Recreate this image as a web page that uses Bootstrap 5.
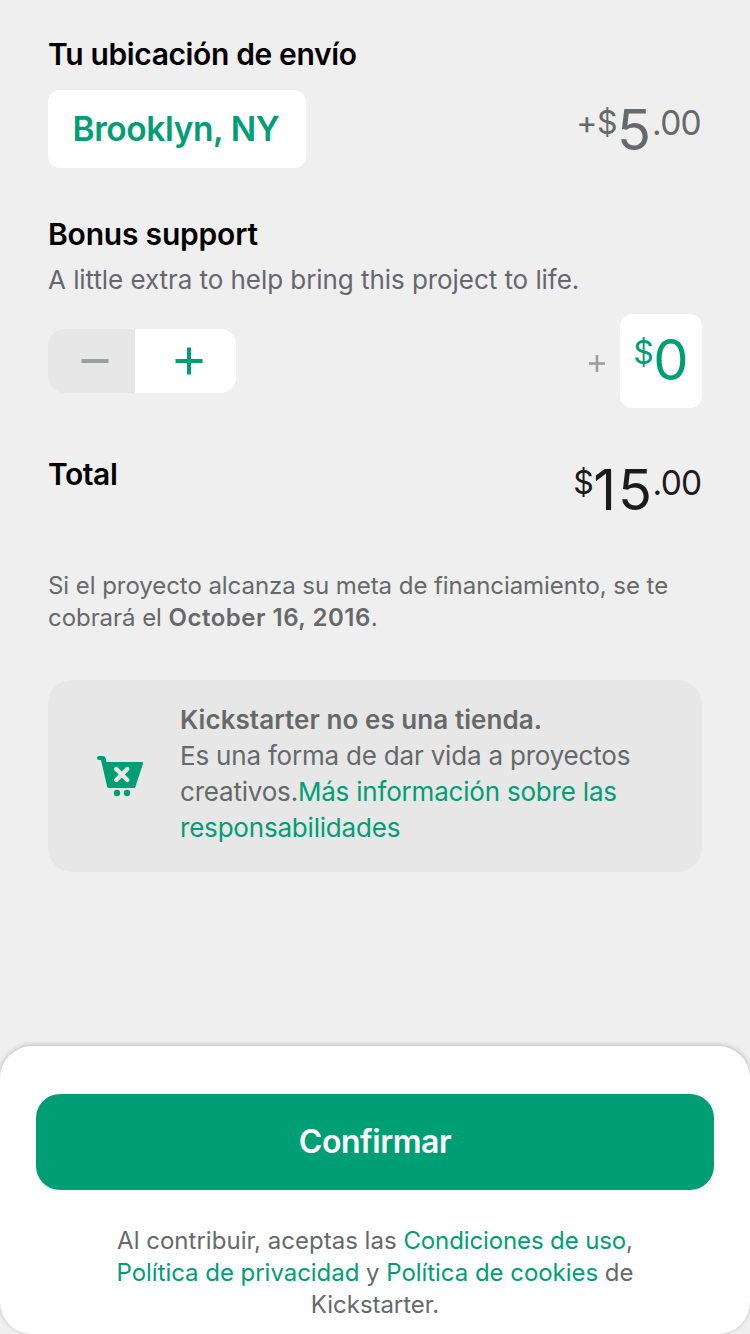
<!DOCTYPE html>
<html lang="es">
<head>
<meta charset="utf-8">
<meta name="viewport" content="width=device-width, initial-scale=1">
<title>Confirmar contribución</title>
<link href="https://cdn.jsdelivr.net/npm/bootstrap@5.3.0/dist/css/bootstrap.min.css" rel="stylesheet">
<style>
:root { --ks-green: #009e74; --ks-grey: #656969; --ks-bg: #efefef; --ks-soft: #e7e7e7; }
body { background: var(--ks-bg); font-family: Inter, "Liberation Sans", sans-serif; color: var(--ks-grey); }
.screen { height: 1334px; overflow: hidden; white-space: nowrap; }
.pledge { padding: 36px 48px 0; height: 1046px; }
.heading { font-size: 30px; line-height: 37px; height: 36px; font-weight: 600; color: #000; margin: 0; letter-spacing: -.2px; }
.heading-location { letter-spacing: -.37px; }
.heading-total { letter-spacing: -.45px; }
.green { color: var(--ks-green); text-decoration: none; }
.row-location { margin-top: 18px; }
.place { width: 258px; height: 78px; border-radius: 12px; border: 0; font-size: 33.5px; font-weight: 600; line-height: 78px; padding: 0 0 0 24.5px; text-align: left; background: #fff; letter-spacing: -.4px; }
.heading-bonus { margin-top: 48px; }
.hint { font-size: 26px; line-height: 32px; margin-top: 12px; letter-spacing: -.06px; color: #66666e; }
.row-bonus { margin-top: 18px; }
.amount { display: flex; align-items: flex-start; }
.amount .big { font-size: 56px; line-height: 68px; margin-top: 6px; }
.amount .raised { font-size: 33.5px; line-height: 42px; margin-top: 12px; }
.amount .currency { font-size: 32px; letter-spacing: -.5px; }
.amount .cents { letter-spacing: -.7px; margin-left: 1px; margin-right: 1px; }
.amount-total { color: #1b1b1b; margin-top: -6px; }
.amount-total .big { letter-spacing: 2px; }
.amount-total .cents { margin-left: -1.5px; margin-right: .5px; }
.stepper { width: 188px; height: 64px; margin-top: 15px; border-radius: 16px; overflow: hidden; background: #fff; }
.stepper button { border: 0; padding: 0; display: block; }
.stepper .minus { width: 87px; background: var(--ks-soft); }
.stepper .plus { width: 101px; background: #fff; }
.stepper svg, .extra svg, .cart { display: block; }
.bonus { width: 82px; height: 94px; border-radius: 12px; background: #fff; padding-top: 6px; }
.row-total { margin-top: 48px; height: 70px; }
.deadline { font-size: 24px; line-height: 32px; margin-top: 44px; letter-spacing: -.055px; }
.deadline b { letter-spacing: .5px; }
.notice { height: 192px; margin-top: 46px; border-radius: 24px; background: var(--ks-soft); padding: 22px 0 0 48px; }
.cart { margin-top: 50px; }
.notice-text { font-size: 26px; line-height: 36px; margin-left: 36px; letter-spacing: -.2px; }
.notice-text b { letter-spacing: .06px; }
.footer-sheet { height: 288px; border-radius: 32px; background: #fff; padding: 48px 36px 0; box-shadow: 0 -1px 5px rgba(0,0,0,.22); }
.confirm { height: 96px; border-radius: 24px; background: var(--ks-green); border: 0; color: #fff; font-size: 32px; font-weight: 600; width: 100%; letter-spacing: -.45px; }
.legal { font-size: 24px; line-height: 32px; margin-top: 35px; letter-spacing: -.04px; }
.legal .lead-in { letter-spacing: .02px; }
.legal .terms { letter-spacing: -.12px; }
</style>
</head>
<body>
<div class="screen">
  <main class="pledge">
    <h2 class="heading heading-location">Tu ubicación de envío</h2>
    <div class="row-location d-flex justify-content-between">
      <button class="place green">Brooklyn, NY</button>
      <div class="amount"><span class="raised currency">+$</span><span class="big">5</span><span class="raised cents">.00</span></div>
    </div>
    <h2 class="heading heading-bonus">Bonus support</h2>
    <div class="hint">A little extra to help bring this project to life.</div>
    <div class="row-bonus d-flex justify-content-between">
      <div class="stepper d-flex">
        <button class="minus" aria-label="Menos"><svg width="87" height="64"><path d="M33.500 32H60.500" stroke="#9b9e9e" stroke-width="4"/></svg></button>
        <button class="plus" aria-label="Más"><svg width="101" height="64"><path d="M40.500 32H67.500M54 18.500V45.500" stroke="#009e74" stroke-width="4"/></svg></button>
      </div>
      <div class="extra d-flex">
        <svg width="40" height="94"><path d="M9 49.500H25M17 41V58" stroke="#9b9e9e" stroke-width="2.600"/></svg>
        <div class="bonus amount green justify-content-center"><span class="raised currency">$</span><span class="big">0</span></div>
      </div>
    </div>
    <div class="row-total d-flex justify-content-between">
      <h2 class="heading heading-total">Total</h2>
      <div class="amount amount-total"><span class="raised currency">$</span><span class="big">15</span><span class="raised cents">.00</span></div>
    </div>
    <div class="deadline">Si el proyecto alcanza su meta de financiamiento, se te<br>cobrará el <b class="fw-semibold">October 16, 2016</b>.</div>
    <section class="notice d-flex">
      <svg class="cart" width="48" height="48" viewBox="0 0 48 48">
        <path fill="#009e74" d="M3 4H7Q9 4 9.600 6.200L10.500 10H46Q47.500 10 47 11.500L39.500 34.500Q39 36 37.500 36H13Q11.500 36 11.100 34.500L5 8H3Q1 8 1 6Q1 4 3 4Z"/>
        <path d="M20.200 17L31.300 28M31.300 17L20.200 28" stroke="#e7e7e7" stroke-width="4.400" stroke-linecap="round"/>
        <circle cx="21" cy="41" r="3.200" fill="#009e74"/><circle cx="31" cy="41" r="3.200" fill="#009e74"/>
      </svg>
      <div class="notice-text"><b class="fw-semibold">Kickstarter no es una tienda.</b><br>Es una forma de dar vida a proyectos<br>creativos.<a class="green">Más información sobre las</a><br><a class="green">responsabilidades</a></div>
    </section>
  </main>
  <footer class="footer-sheet">
    <button class="confirm">Confirmar</button>
    <div class="legal text-center"><span class="lead-in">Al contribuir, aceptas las </span><a class="green terms">Condiciones de uso</a>,<br><a class="green">Política de privacidad</a> y <a class="green">Política de cookies</a> de<br>Kickstarter.</div>
  </footer>
</div>
<script src="https://cdn.jsdelivr.net/npm/bootstrap@5.3.0/dist/js/bootstrap.bundle.min.js"></script>
</body>
</html>
